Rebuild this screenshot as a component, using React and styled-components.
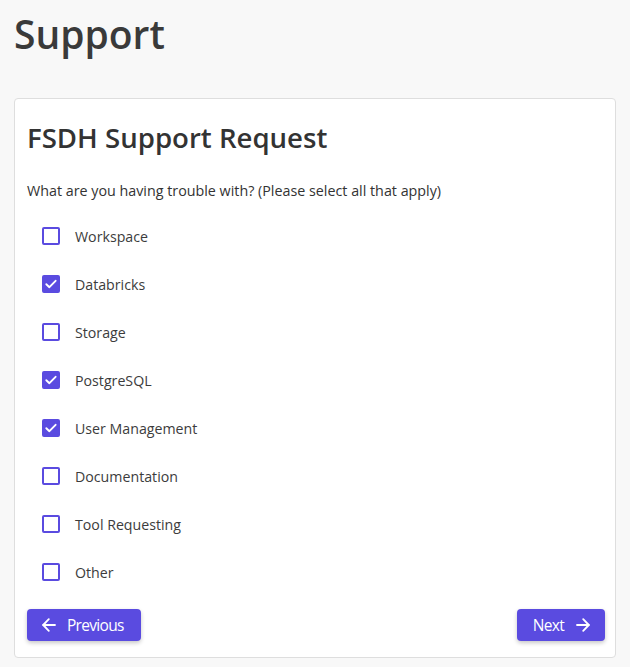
import { useState } from 'react';
import styled, { createGlobalStyle } from 'styled-components';

const GlobalStyle = createGlobalStyle`
  body {
    margin: 0;
    background: #f8f8f8;
    font-family: 'Open Sans', 'Noto Sans', sans-serif;
    color: #333;
  }
`;

const OPTIONS = [
  { label: 'Workspace', checked: false },
  { label: 'Databricks', checked: true },
  { label: 'Storage', checked: false },
  { label: 'PostgreSQL', checked: true },
  { label: 'User Management', checked: true },
  { label: 'Documentation', checked: false },
  { label: 'Tool Requesting', checked: false },
  { label: 'Other', checked: false },
];

const ArrowLeft = () => (
  <svg width="14" height="14" viewBox="0 0 14 14" fill="none" stroke="currentColor" strokeWidth="1.8" strokeLinecap="round" strokeLinejoin="round">
    <path d="M13 7H1.2" />
    <path d="M6.8 1.2L1.2 7l5.6 5.8" />
  </svg>
);

const ArrowRight = () => (
  <svg width="14" height="14" viewBox="0 0 14 14" fill="none" stroke="currentColor" strokeWidth="1.8" strokeLinecap="round" strokeLinejoin="round">
    <path d="M1 7h11.8" />
    <path d="M7.2 1.2L12.8 7l-5.6 5.8" />
  </svg>
);

const App = () => {
  const [items, setItems] = useState(OPTIONS);

  const toggle = (idx) => {
    setItems(items.map((it, i) => (i === idx ? { ...it, checked: !it.checked } : it)));
  };

  return (
    <Page>
      <GlobalStyle />
      <PageTitle>Support</PageTitle>
      <Card>
        <CardTitle>FSDH Support Request</CardTitle>
        <Question>What are you having trouble with? (Please select all that apply)</Question>
        <List>
          {items.map((it, i) => (
            <Row key={it.label} onClick={() => toggle(i)}>
              <Box $checked={it.checked}>
                {it.checked && (
                  <svg width="14" height="14" viewBox="0 0 14 14" fill="none">
                    <path d="M2.3 7.2l3.1 3 6.2-6.4" stroke="#fff" strokeWidth="1.9" strokeLinecap="round" strokeLinejoin="round" />
                  </svg>
                )}
              </Box>
              <Label>{it.label}</Label>
            </Row>
          ))}
        </List>
        <Footer>
          <NavButton>
            <ArrowLeft />
            Previous
          </NavButton>
          <NavButton $next>
            Next
            <ArrowRight />
          </NavButton>
        </Footer>
      </Card>
    </Page>
  );
};

export default App;

const Page = styled.div`
  padding: 0 14px 10px 14px;
`;

const PageTitle = styled.h1`
  margin: 0;
  padding-top: 6px;
  font-size: 39px;
  font-weight: 600;
  line-height: 56px;
  color: #3a3a3a;
  height: 92px;
`;

const Card = styled.div`
  background: #fff;
  border: 1px solid #dedede;
  border-radius: 4px;
  padding: 16px 10px 16px 12px;
`;

const CardTitle = styled.h2`
  margin: 0;
  font-size: 27.6px;
  font-weight: 600;
  line-height: 44px;
  color: #333;
`;

const Question = styled.p`
  margin: 22px 0 0 0;
  font-size: 14.3px;
  line-height: 20px;
  color: #333;
`;

const List = styled.div`
  display: flex;
  flex-direction: column;
  margin-top: 11px;
  padding-left: 15px;
`;

const Row = styled.label`
  display: flex;
  align-items: center;
  gap: 15px;
  height: 48px;
  cursor: pointer;
`;

const Box = styled.span`
  box-sizing: border-box;
  width: 18px;
  height: 18px;
  border-radius: 2px;
  border: 2px solid #5a4be0;
  background: ${({ $checked }) => ($checked ? '#5a4be0' : '#fff')};
  display: flex;
  align-items: center;
  justify-content: center;
`;

const Label = styled.span`
  font-size: 14.2px;
  color: #3c3c3c;
`;

const Footer = styled.div`
  display: flex;
  justify-content: space-between;
  margin-top: 13px;
`;

const NavButton = styled.button`
  display: flex;
  align-items: center;
  gap: ${({ $next }) => ($next ? '12px' : '11px')};
  height: 32px;
  padding: ${({ $next }) => ($next ? '0 15px 0 16px' : '0 17px 0 15px')};
  background: #5a4be0;
  color: #fff;
  border: none;
  border-radius: 4px;
  font-family: 'Open Sans', sans-serif;
  font-size: 15.5px;
  font-weight: 500;
  letter-spacing: -0.7px;
  cursor: pointer;
  box-shadow: 0 2px 4px rgba(0, 0, 0, 0.22);
`;
